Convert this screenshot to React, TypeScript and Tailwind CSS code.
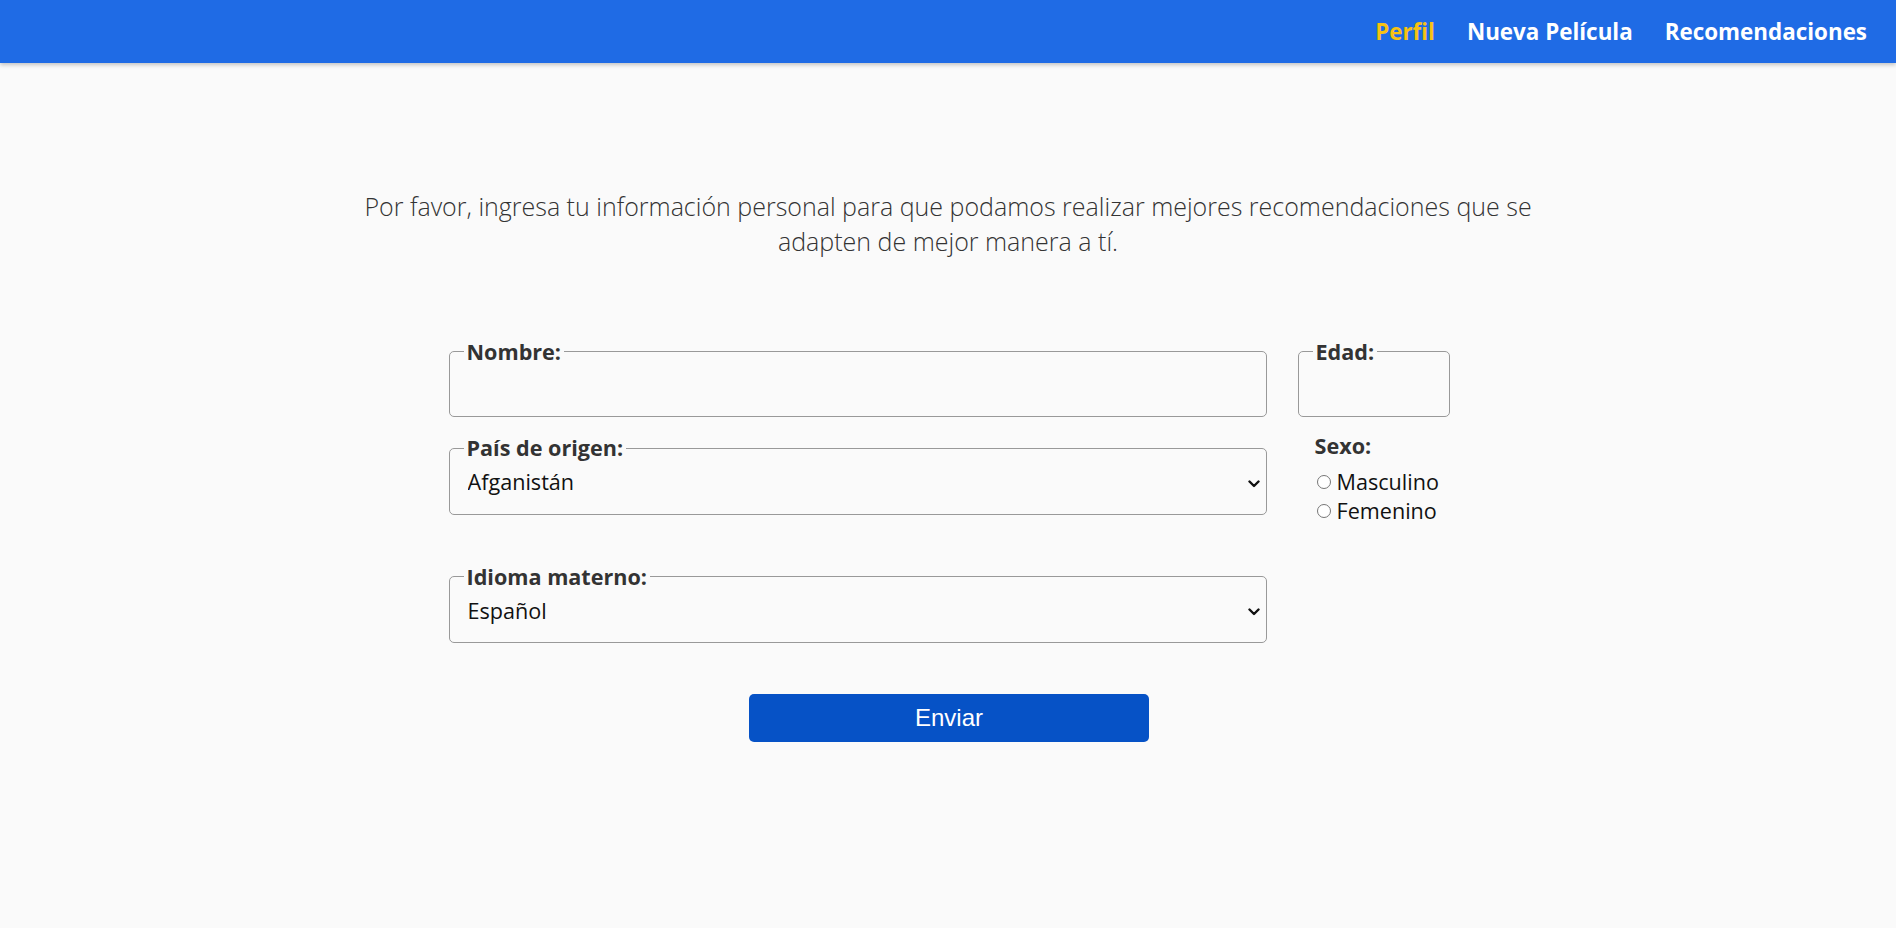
import React, { useState } from 'react';

const PAISES = ['Afganistán', 'Albania', 'Alemania', 'Argentina', 'Bolivia', 'Chile', 'Colombia', 'Ecuador', 'España', 'México', 'Perú', 'Venezuela'];
const IDIOMAS = ['Español', 'Inglés', 'Francés', 'Alemán', 'Portugués'];

const Chevron = () => (
    <svg width="12" height="8" viewBox="0 0 12 8" className="pointer-events-none absolute right-[-8px] top-[17px]">
        <path d="M1.5 1.5 L6 6 L10.5 1.5" fill="none" stroke="#111" strokeWidth="2.4" strokeLinecap="round" strokeLinejoin="round" />
    </svg>
);

const Field: React.FC<{ label: string; width: string; children: React.ReactNode }> = ({ label, width, children }) => (
    <fieldset className={`${width} border border-[#999] rounded-[5px] px-[14px]`}>
        <legend className="px-[3px] text-[21.6px] font-bold text-[#333] leading-[29.4px]">{label}</legend>
        {children}
    </fieldset>
);

const SelectField: React.FC<{ label: string; options: string[]; value: string; onChange: (v: string) => void }> = ({ label, options, value, onChange }) => (
    <Field label={label} width="w-[818px]">
        <div className="relative">
            <select
                value={value}
                onChange={e => onChange(e.target.value)}
                className="appearance-none w-full h-[51px] pl-[4px] pb-[12px] bg-transparent outline-none text-[21.6px] text-[#111]"
            >
                {options.map(o => (
                    <option key={o}>{o}</option>
                ))}
            </select>
            <Chevron />
        </div>
    </Field>
);

export default function App() {
    const [pais, setPais] = useState('Afganistán');
    const [idioma, setIdioma] = useState('Español');
    const [sexo, setSexo] = useState('');

    return (
        <div className="min-h-screen bg-[#fafafa] font-['Open_Sans',sans-serif]">
            {/* Navbar */}
            <nav className="h-[63px] bg-[#1f6be5] flex items-center justify-end pr-[29px] gap-[32px] shadow-[0_2px_4px_rgba(0,0,0,0.22)] relative z-10">
                <a className="text-[22.4px] font-bold text-[#f7c212] cursor-pointer">Perfil</a>
                <a className="text-[22.4px] font-bold text-white cursor-pointer">Nueva Película</a>
                <a className="text-[22.4px] font-bold text-white cursor-pointer">Recomendaciones</a>
            </nav>

            <p className="w-[1240px] mx-auto mt-[126px] text-center text-[25px] leading-[34.5px] font-light text-[#333]">
                Por favor, ingresa tu información personal para que podamos realizar mejores recomendaciones que se adapten de mejor manera a tí.
            </p>

            <form className="w-[1001px] mx-auto mt-[79px] pl-[2px] box-content" onSubmit={e => e.preventDefault()}>
                <div className="flex gap-[31px] items-start">
                    <Field label="Nombre:" width="w-[818px]">
                        <input type="text" className="w-full h-[50px] bg-transparent outline-none text-[21.6px] pl-[4px]" />
                    </Field>
                    <Field label="Edad:" width="w-[152px]">
                        <input type="text" className="w-full h-[50px] bg-transparent outline-none text-[21.6px] pl-[4px]" />
                    </Field>
                </div>

                <div className="flex gap-[31px] items-start mt-[16px]">
                    <SelectField label="País de origen:" options={PAISES} value={pais} onChange={setPais} />
                    <div className="w-[152px] pl-[17px] -mt-[2px]">
                        <div className="text-[21.6px] font-bold text-[#333] leading-[29.4px]">Sexo:</div>
                        <div className="mt-[7px]">
                            {['Masculino', 'Femenino'].map(s => (
                                <label key={s} className="flex items-center h-[29px] text-[21.6px] text-[#111] cursor-pointer">
                                    <input
                                        type="radio"
                                        name="sexo"
                                        checked={sexo === s}
                                        onChange={() => setSexo(s)}
                                        className="appearance-none w-[14px] h-[14px] ml-[2px] mr-[6px] rounded-full border border-[#767676] bg-white checked:border-[4px] checked:border-[#1f6be5]"
                                    />
                                    {s}
                                </label>
                            ))}
                        </div>
                    </div>
                </div>

                <div className="mt-[36px]">
                    <SelectField label="Idioma materno:" options={IDIOMAS} value={idioma} onChange={setIdioma} />
                </div>

                <div className="flex justify-center mt-[51px]">
                    <button type="submit" className="w-[400px] h-[48px] rounded-[5px] bg-[#0652c6] text-white text-[24px] font-['Liberation_Sans',Arial,sans-serif]">
                        Enviar
                    </button>
                </div>
            </form>
        </div>
    );
}
